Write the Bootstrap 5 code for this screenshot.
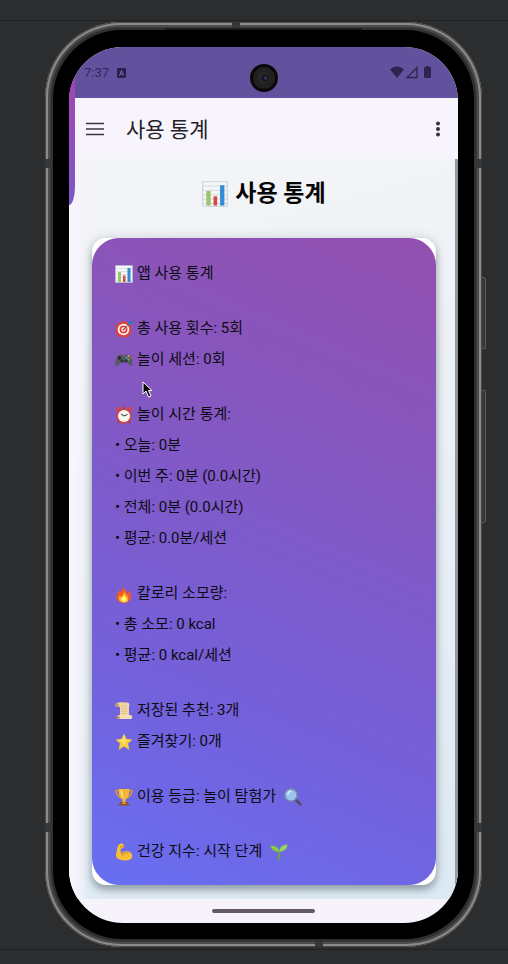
<!DOCTYPE html>
<html lang="ko">
<head>
<meta charset="utf-8">
<meta name="viewport" content="width=device-width, initial-scale=1">
<title>사용 통계</title>
<link rel="stylesheet" href="https://cdn.jsdelivr.net/npm/bootstrap@5.3.0/dist/css/bootstrap.min.css">
<style>
body{background:#2c2d2f;color:#0d0b12;font-family:Roboto,"Noto Sans CJK KR",sans-serif;font-size:15px}
.stage{padding:22px 26px 18px 45px;min-height:100vh}
.stage::before,.stage::after{content:"";position:absolute;left:0;right:0;height:1px;background:#202123}
.stage::before{top:20px}
.stage::after{bottom:15px}
.phone{padding:8px;border-radius:76px;background:#2f2f2f;box-shadow:inset 0 0 0 1px #4b4b4a,inset 0 0 0 3px #8b8b89,inset 0 0 0 5px #4c4c4b,inset 0 0 0 6px #3b3b3b}
.bezel{padding:17px 16px 16px;border-radius:69px;background:#000}
.screen{border-radius:54px;background:#f7f3fb}
.notch{background:#353638}
.n-top{left:187px;top:0;width:8px;height:7px}
.n-bottom{left:270px;bottom:0;width:8px;height:6px}
.n-side{width:7px;height:9px}
.n-left{left:0}.n-right{right:0}
.n-high{top:137px}.n-low{bottom:115px}
.speaker{left:120px;right:120px;top:6px;height:2px;background:#1a1a1a}
.side-key{right:-4px;width:4px;background:#363738;border:1px solid #5b5c5b;border-left:0;border-radius:0 2px 2px 0}
.k1{top:255px;height:72px}.k2{top:368px;height:133px}
.status{height:51px;padding:0 26px 0 15px;background:#62519d;color:#36275d;font-size:13px}
.camera{left:0;right:0;top:17px;z-index:2}
.drawer-edge{left:0;top:0;z-index:1;width:6px;height:158px;background:linear-gradient(#a344b5 20%,#9a4cba 45%,#7a57c8);border-radius:0 0 6px 0/0 0 18px 0}
.topbar{height:61px;margin-left:6px;padding:0 17px 0 11px;background:#f8f4fb}
.icon-btn{background:none;border:0;padding:0;line-height:0;color:#39343e}
.page-name{font-size:21px;line-height:30px;margin-left:22px;padding-top:2px;color:#242027}
.content-pane{padding:19px 22px 14px 23px;background:linear-gradient(90deg,#f7f4fb 0,#f7f4fb 6px,#f7f4fb00 20px),linear-gradient(165deg,#f4f5f7,#eaf0f6 50%,#dce9f3)}
.scroll-thumb{top:0;right:0;bottom:4px;width:3px;background:#9299a3}
.headline{font-size:23px;line-height:30px;margin-bottom:29px;padding-top:1px;color:#050505;gap:7px}
.panel{background:#fff;border-radius:14px;box-shadow:0 5px 7px #5d6c7688,0 0 12px #78869044}
.stats{border-radius:27px;padding:20px 23px 18px;background:linear-gradient(203deg,#9350b0,#8557c0 32%,#7460da 70%,#686ff2);gap:24px}
.line{height:31px;line-height:31px;gap:4px;white-space:nowrap}
.emo{width:18px;height:18px;flex:none}
.home-area{height:24px;padding-top:10px}
.home-bar{width:103px;height:4px;border-radius:2px;background:#655b65}
.pointer{left:73px;top:334px}
</style>
<script src="https://cdn.jsdelivr.net/npm/bootstrap@5.3.0/dist/js/bootstrap.bundle.min.js"></script>
</head>
<body>
<svg class="d-none" aria-hidden="true">
<symbol id="chart" viewBox="0 0 36 36"><path fill="#f6f7f8" stroke="#b8c1ca" d="M1 1h34v34H1z"/><path stroke="#c4ccd3" d="M1 7h34M1 13h34M1 19h34M1 25h34M1 31h34"/><path fill="#9ac46c" d="M6 14h6v20H6z"/><path fill="#dc493e" d="M16 21h5v13h-5z"/><path fill="#318bd5" d="M25 6h6v28h-6z"/></symbol>
<symbol id="target" viewBox="0 0 36 36"><circle cx="17" cy="19" r="16" fill="#e44134"/><circle cx="17" cy="19" r="11.5" fill="#fff"/><circle cx="17" cy="19" r="8" fill="#e44134"/><circle cx="17" cy="19" r="4.5" fill="#fff"/><circle cx="17" cy="19" r="2" fill="#d9372c"/><path stroke="#74515b" stroke-width="2" d="M17 19 29 8"/><path fill="#287fb8" d="m26 10 1-6 5-4v4l4 1-5 5z"/></symbol>
<symbol id="pad" viewBox="0 0 36 36"><path fill="#535b61" d="M8 7h6l2 2h4l2-2h6c5 3 8 13 7 20-1 4-4 4-6 1l-5-6H12l-5 6c-2 3-5 3-6-1C0 20 3 10 8 7z"/><path stroke="#252a2e" stroke-width="3" d="M9 10v8m-4-4h8"/><circle cx="14" cy="20" r="3.5" fill="#30363b"/><circle cx="22" cy="20" r="3.5" fill="#30363b"/><circle cx="27" cy="10" r="2" fill="#e8ba3c"/><circle cx="31" cy="14" r="2" fill="#d84d4d"/><circle cx="23" cy="14" r="2" fill="#4b9bd2"/><circle cx="27" cy="17" r="2" fill="#65b85d"/></symbol>
<symbol id="clock" viewBox="0 0 36 36"><path stroke="#a92f29" stroke-width="3" d="m9 29-3 5m21-5 3 5"/><path fill="#dc4439" d="M2 12C0 5 5 0 13 3zm32 0c2-7-3-12-11-9z"/><circle cx="18" cy="20" r="15" fill="#d74439"/><circle cx="18" cy="20" r="12" fill="#f7f5ed"/><path fill="none" stroke="#343039" stroke-width="2" d="m12 16 6 4 7-3"/><path stroke="#bb352e" stroke-width="2" d="M18 1v5"/></symbol>
<symbol id="fire" viewBox="0 0 36 36"><path fill="#ee592b" d="M16 0c0 7 8 10 9 17 2-2 2-5 1-7 6 5 8 14 4 20-4 6-12 7-18 5C5 33 1 26 4 19c1-4 3-7 4-10 2 2 2 4 2 6 5-4 6-9 6-15z"/><path fill="#ffad20" d="M18 11c1 7 7 9 8 15 3 7-4 10-9 9C8 35 5 27 10 20c0 2 1 3 2 4 4-3 6-7 6-13z"/><path fill="#fff078" d="M18 19c1 5 6 6 5 11-2 6-10 5-11-1 0-3 5-5 6-10z"/></symbol>
<symbol id="scroll" viewBox="0 0 36 36"><path fill="#efd6a3" d="M4 2c5-3 15-1 21-1 4 1 5 5 3 8v17H10V10H3C0 8 1 4 4 2z"/><path fill="#c59c66" d="M3 3c4-1 6 4 5 7H4C0 9 0 5 3 3z"/><path fill="#f4dfb2" d="M7 26h24c4 1 5 6 1 8H9c-6 0-7-6-2-8z"/><path fill="#bb905b" d="M5 27c4-1 6 5 3 7-6 0-7-5-3-7z"/><path stroke="#c5aa78" d="M13 8h11M13 13h11M13 18h11M13 23h11"/></symbol>
<symbol id="star" viewBox="0 0 36 36"><path fill="#f7cc42" d="m18 1 5 11 12 1-9 8 3 13-11-7-11 7 3-13-9-8 12-1z"/><path fill="#ffe16a" d="m18 4 2 11 10 0-10 4-2 6-3-7-9-4 9-1z"/></symbol>
<symbol id="cup" viewBox="0 0 36 36"><path fill="none" stroke="#dc992a" stroke-width="3" d="M9 5H2c0 9 5 12 10 14M27 5h7c0 9-5 12-10 14"/><path fill="#f4b637" d="M7 2h22c0 12-3 19-8 21v5h-6v-5C10 21 7 14 7 2z"/><path fill="#ffe08a" d="M11 4h4c0 7 0 12 2 16-4-2-6-8-6-16z"/><path fill="#8a542d" d="M10 28h16v4h3v3H7v-3h3z"/><path fill="#dda137" d="M14 29h8v3h-8z"/></symbol>
<symbol id="lens" viewBox="0 0 36 36"><path stroke="#50515f" stroke-width="5" stroke-linecap="round" d="m23 23 10 10"/><circle cx="14" cy="14" r="12" fill="#9bc4ef" stroke="#7794aa" stroke-width="3"/><path fill="none" stroke="#dcf3fd" stroke-width="3" d="M7 13c1-4 3-6 7-7"/></symbol>
<symbol id="arm" viewBox="0 0 36 36"><path fill="#f8bf35" d="M8 3c3-3 9-2 10 1 1 4-2 7-7 8l1 9c6-5 15-6 20-1 4 5 3 11-2 13-9 4-21 1-26-3-3-3-2-10 0-17 1-5 2-8 4-10z"/><path fill="none" stroke="#c98724" stroke-width="2" d="M10 8c4 1 6-1 7-4M12 21l5 5m-2-4c5-3 9-3 12-1"/></symbol>
<symbol id="sprout" viewBox="0 0 36 36"><path fill="none" stroke="#68a83e" stroke-width="4" d="M17 35c-1-7 1-12 3-19"/><path fill="#79bd43" d="M19 18C9 19 2 14 1 5c10-1 17 4 18 13z"/><path fill="#92ce51" d="M19 17C19 8 25 3 35 3c0 9-7 15-16 14z"/><path fill="none" stroke="#c2e77d" stroke-width="1.5" d="M5 8c5 2 8 4 12 8m4-1c3-4 6-6 10-8"/></symbol>
</svg>
<div class="stage position-relative">
<div class="phone position-relative">
  <span class="notch n-top position-absolute"></span><span class="notch n-bottom position-absolute"></span>
  <span class="notch n-side n-left n-high position-absolute"></span><span class="notch n-side n-right n-high position-absolute"></span>
  <span class="notch n-side n-left n-low position-absolute"></span><span class="notch n-side n-right n-low position-absolute"></span>
  <span class="speaker position-absolute"></span><span class="side-key k1 position-absolute"></span><span class="side-key k2 position-absolute"></span>
  <div class="bezel">
  <div class="screen position-relative overflow-hidden">
    <div class="status d-flex align-items-center">
      <span>7:37</span>
      <svg class="ms-2" width="9" height="10" viewBox="0 0 9 10"><rect width="9" height="10" rx="1" fill="#2c2052"/><path d="m2.5 7.5 2-5 2 5M3 6h3" fill="none" stroke="#796ba8"/></svg>
      <svg class="ms-auto" width="42" height="13" viewBox="0 0 42 13" fill="#30234f"><path d="M0 3.5C4-.5 10-.5 14 3.5L7 12z"/><path d="M27 1.5v10H17z" fill="none" stroke="#30234f" stroke-width="1.3"/><path d="M36 0h3v1h1q1 0 1 1v9q0 1-1 1h-5q-1 0-1-1V2q0-1 1-1h1z"/></svg>
    </div>
    <div class="camera position-absolute d-flex justify-content-center"><svg width="28" height="28" viewBox="0 0 28 28"><circle cx="14" cy="14" r="14" fill="#080808"/><circle cx="14" cy="14" r="11" fill="#20201f"/><circle cx="14" cy="14" r="6" fill="#292728"/><circle cx="15" cy="14" r="3.5" fill="#171426"/><circle cx="15.5" cy="14" r="1.5" fill="#3b356b"/></svg></div>
    <div class="drawer-edge position-absolute"></div>
    <header class="topbar d-flex align-items-center">
      <button class="icon-btn" type="button" aria-label="메뉴"><svg width="18" height="14" viewBox="0 0 18 14" stroke="currentColor" stroke-width="1.6"><path d="M0 1.5h18M0 7h18M0 12.5h18"/></svg></button>
      <span class="page-name">사용 통계</span>
      <button class="icon-btn ms-auto" type="button" aria-label="더보기"><svg width="6" height="16" viewBox="0 0 6 16" fill="currentColor"><circle cx="3" cy="2.5" r="2"/><circle cx="3" cy="8" r="2"/><circle cx="3" cy="13.5" r="2"/></svg></button>
    </header>
    <main class="content-pane position-relative">
      <div class="scroll-thumb position-absolute"></div>
      <h1 class="headline fw-bold d-flex align-items-center justify-content-center"><svg width="26" height="26"><use href="#chart"/></svg>사용 통계</h1>
      <section class="panel"><div class="stats d-flex flex-column">
        <div class="line d-flex align-items-center"><svg class="emo"><use href="#chart"/></svg>앱 사용 통계</div>
        <div>
          <div class="line d-flex align-items-center"><svg class="emo"><use href="#target"/></svg>총 사용 횟수: 5회</div>
          <div class="line d-flex align-items-center"><svg class="emo"><use href="#pad"/></svg>놀이 세션: 0회</div>
        </div>
        <div>
          <div class="line d-flex align-items-center"><svg class="emo"><use href="#clock"/></svg>놀이 시간 통계:</div>
          <div class="line">• 오늘: 0분</div>
          <div class="line">• 이번 주: 0분 (0.0시간)</div>
          <div class="line">• 전체: 0분 (0.0시간)</div>
          <div class="line">• 평균: 0.0분/세션</div>
        </div>
        <div>
          <div class="line d-flex align-items-center"><svg class="emo"><use href="#fire"/></svg>칼로리 소모량:</div>
          <div class="line">• 총 소모: 0 kcal</div>
          <div class="line">• 평균: 0 kcal/세션</div>
        </div>
        <div>
          <div class="line d-flex align-items-center"><svg class="emo"><use href="#scroll"/></svg>저장된 추천: 3개</div>
          <div class="line d-flex align-items-center"><svg class="emo"><use href="#star"/></svg>즐겨찾기: 0개</div>
        </div>
        <div class="line d-flex align-items-center"><svg class="emo"><use href="#cup"/></svg>이용 등급: 놀이 탐험가 <svg class="emo ms-1"><use href="#lens"/></svg></div>
        <div class="line d-flex align-items-center"><svg class="emo"><use href="#arm"/></svg>건강 지수: 시작 단계 <svg class="emo ms-1"><use href="#sprout"/></svg></div>
      </div></section>
    </main>
    <div class="home-area"><div class="home-bar mx-auto"></div></div>
    <svg class="pointer position-absolute" width="11" height="17" viewBox="0 0 11 17"><path d="M1 1v12l3-3 2.5 6 2.5-1-2.5-5.5H10z" fill="#080808" stroke="#fff"/></svg>
  </div>
  </div>
</div>
</div>
</body>
</html>
